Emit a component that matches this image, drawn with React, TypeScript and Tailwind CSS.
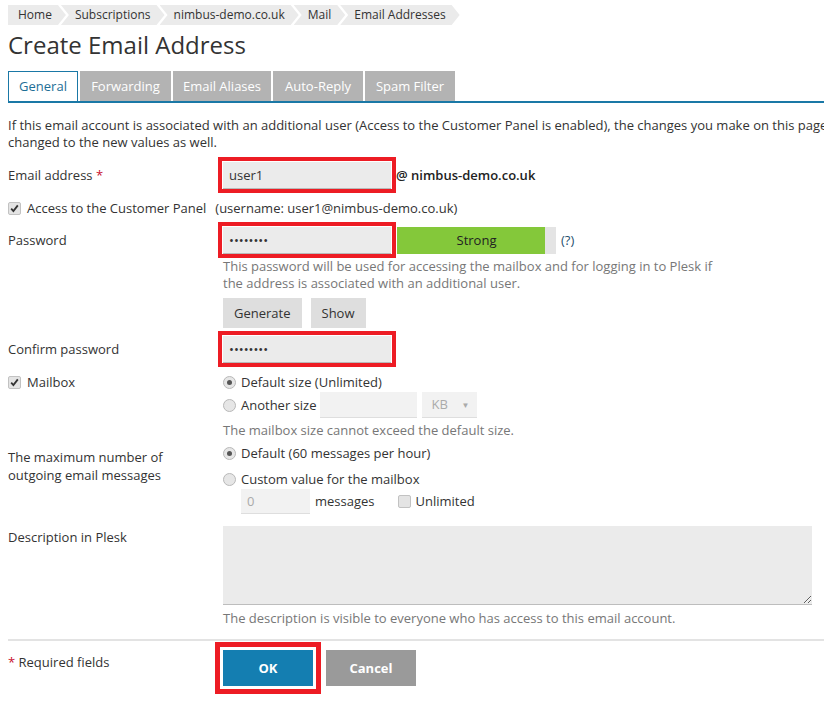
import React from 'react';

const crumbs = ['Home', 'Subscriptions', 'nimbus-demo.co.uk', 'Mail', 'Email Addresses'];
const tabs = [
  { label: 'General', w: 'w-[70px]' },
  { label: 'Forwarding', w: 'w-[91px]' },
  { label: 'Email Aliases', w: 'w-[98px]' },
  { label: 'Auto-Reply', w: 'w-[90px]' },
  { label: 'Spam Filter', w: 'w-[90px]' },
];

const RedBox: React.FC = () => (
  <span className="pointer-events-none absolute -inset-[5px] border-4 border-[#ed1c24]" />
);

const Checkbox: React.FC<{ checked?: boolean }> = ({ checked }) => (
  <span className="flex h-[13px] w-[13px] shrink-0 items-center justify-center rounded-[2px] border border-[#c2c2c2] bg-[#e4e4e4]">
    {checked && (
      <svg width="9" height="9" viewBox="0 0 9 9">
        <path d="M1.2 4.6 L3.4 7 L7.8 1.4" fill="none" stroke="#333" strokeWidth="1.8" />
      </svg>
    )}
  </span>
);

const Radio: React.FC<{ checked?: boolean }> = ({ checked }) => (
  <span className="flex h-[13px] w-[13px] shrink-0 items-center justify-center rounded-full border border-[#b8b8b8] bg-[#e6e6e6]">
    {checked && <span className="h-[5px] w-[5px] rounded-full bg-[#555]" />}
  </span>
);

const Label: React.FC<{ children?: React.ReactNode; className?: string }> = ({ children, className = '' }) => (
  <div className={`w-[215px] shrink-0 ${className}`}>{children}</div>
);

const App: React.FC = () => {
  return (
    <div className="h-[702px] w-[824px] overflow-hidden bg-white font-['Open_Sans',sans-serif] text-[13px] leading-[17px] text-[#333]">
      <div className="w-[1000px] pl-2 pt-[5px]">
        {/* breadcrumbs */}
        <nav className="flex h-5 text-[12px] leading-5">
          {crumbs.map((c, i) => (
            <span
              key={c}
              className={
                i === 0
                  ? 'bg-[#ebebeb] pl-[10px] pr-[14px] [clip-path:polygon(0_0,calc(100%_-_8px)_0,100%_50%,calc(100%_-_8px)_100%,0_100%)]'
                  : '-ml-[5px] bg-[#ebebeb] pl-[14px] pr-[14px] [clip-path:polygon(0_0,calc(100%_-_8px)_0,100%_50%,calc(100%_-_8px)_100%,0_100%,8px_50%)]'
              }
            >
              {c}
            </span>
          ))}
        </nav>

        <h1 className="mt-[5px] text-[24px] font-normal leading-[29px] text-[#333]">Create Email Address</h1>

        {/* tabs */}
        <div className="mt-3 flex w-[816px] gap-[2px] border-b-2 border-[#1a78a6]">
          {tabs.map((t, i) => (
            <div
              key={t.label}
              className={
                i === 0
                  ? `${t.w} h-[30px] border border-b-0 border-[#1a78a6] bg-white text-center leading-[29px] text-[#1d6e96]`
                  : `${t.w} h-[30px] bg-[#b3b3b3] text-center leading-[30px] text-white`
              }
            >
              {t.label}
            </div>
          ))}
        </div>

        <p className="mt-[14px] whitespace-nowrap">
          If this email account is associated with an additional user (Access to the Customer Panel is enabled), the changes you make on this page will be
          <br />
          changed to the new values as well.
        </p>

        {/* email */}
        <div className="mt-[11px] flex h-[27px] items-center">
          <Label>
            Email address <span className="text-[#c8102e]">*</span>
          </Label>
          <div className="relative h-[27px] w-[168px] border-b border-[#b9b9b9] bg-[#ebebeb] pl-[6px] leading-[27px]">
            user1
            <RedBox />
          </div>
          <span className="ml-[5px] font-semibold text-[#222]">@ nimbus-demo.co.uk</span>
        </div>

        {/* customer panel */}
        <div className="mt-[11px] flex h-[17px] items-center">
          <Checkbox checked />
          <span className="ml-[6px]">Access to the Customer Panel</span>
          <span className="ml-[9px]">(username: user1@nimbus-demo.co.uk)</span>
        </div>

        {/* password */}
        <div className="mt-[10px] flex h-[27px] items-center">
          <Label>Password</Label>
          <div className="relative h-[27px] w-[168px] border-b border-[#b9b9b9] bg-[#ebebeb] pl-[6px] leading-[27px]">
            ••••••••
            <RedBox />
          </div>
          <div className="relative ml-[6px] h-[27px] w-[159px] bg-[#e4e4e4]">
            <div className="h-[27px] w-[148px] bg-[#84c83a]" />
            <span className="absolute inset-0 text-center leading-[27px] text-[#222]">Strong</span>
          </div>
          <span className="ml-[5px] text-[#1f4f6e]">(?)</span>
        </div>
        <div className="mt-[4px] flex">
          <Label />
          <p className="w-[500px] text-[#777]">
            This password will be used for accessing the mailbox and for logging in to Plesk if the address is associated with an additional user.
          </p>
        </div>
        <div className="mt-[6px] flex">
          <Label />
          <div className="flex gap-[9px]">
            <button className="h-[30px] bg-[#dedede] px-[11px] text-[#333]">Generate</button>
            <button className="h-[30px] bg-[#dedede] px-[11px] text-[#333]">Show</button>
          </div>
        </div>

        {/* confirm */}
        <div className="mt-[8px] flex h-[27px] items-center">
          <Label>Confirm password</Label>
          <div className="relative h-[27px] w-[168px] border-b border-[#b9b9b9] bg-[#ebebeb] pl-[6px] leading-[27px]">
            ••••••••
            <RedBox />
          </div>
        </div>

        {/* mailbox */}
        <div className="mt-[11px] flex">
          <Label className="flex h-[17px] items-center">
            <Checkbox checked />
            <span className="ml-[6px]">Mailbox</span>
          </Label>
          <div>
            <div className="flex h-[17px] items-center gap-[5px]">
              <Radio checked />
              <span>Default size (Unlimited)</span>
            </div>
            <div className="mt-[1px] flex h-[26px] items-center">
              <Radio />
              <span className="ml-[5px]">Another size</span>
              <div className="ml-[4px] h-[26px] w-[97px] border-b border-[#dedede] bg-[#f2f2f2]" />
              <div className="ml-[5px] flex h-[26px] w-[55px] items-center justify-between border-b border-[#dedede] bg-[#f2f2f2] pl-[9px] pr-[8px] text-[#aaa]">
                <span>KB</span>
                <span className="text-[8px]">▼</span>
              </div>
            </div>
            <p className="mt-[4px] text-[#777]">The mailbox size cannot exceed the default size.</p>
          </div>
        </div>

        {/* outgoing */}
        <div className="mt-[6px] flex">
          <Label className="pt-[3px] leading-[18px]">
            The maximum number of
            <br />
            outgoing email messages
          </Label>
          <div>
            <div className="flex h-[17px] items-center gap-[5px]">
              <Radio checked />
              <span>Default (60 messages per hour)</span>
            </div>
            <div className="mt-[9px] flex h-[17px] items-center gap-[5px]">
              <Radio />
              <span>Custom value for the mailbox</span>
            </div>
            <div className="mt-[1px] flex h-[25px] items-center pl-[18px]">
              <div className="h-[25px] w-[69px] border-b border-[#dedede] bg-[#f2f2f2] pl-[6px] leading-[25px] text-[#aaa]">0</div>
              <span className="ml-[5px]">messages</span>
              <span className="ml-[23px]">
                <Checkbox />
              </span>
              <span className="ml-[5px]">Unlimited</span>
            </div>
          </div>
        </div>

        {/* description */}
        <div className="mt-[12px] flex">
          <Label className="pt-[3px]">Description in Plesk</Label>
          <div>
            <textarea
              readOnly
              className="block h-[79px] w-[589px] resize border-0 border-b border-[#bdbdbd] bg-[#ebebeb] outline-none"
            />
            <p className="mt-[5px] text-[#777]">The description is visible to everyone who has access to this email account.</p>
          </div>
        </div>

        <div className="mt-[12px] h-[2px] w-[816px] bg-[#e3e3e3]" />

        {/* footer */}
        <div className="mt-[9px] flex">
          <Label className="pt-[4px]">
            <span className="text-[#c8102e]">*</span> Required fields
          </Label>
          <div className="flex gap-[13px]">
            <button className="relative h-[36px] w-[90px] bg-[#147eb1] font-bold text-white">
              OK
              <span className="pointer-events-none absolute -inset-[8px] border-[5px] border-[#ed1c24]" />
            </button>
            <button className="h-[36px] w-[90px] bg-[#9a9a9a] font-bold text-white">Cancel</button>
          </div>
        </div>
      </div>
    </div>
  );
};

export default App;
